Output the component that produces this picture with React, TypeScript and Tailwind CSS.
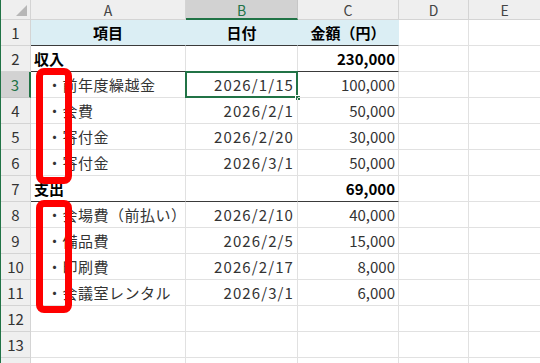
import React from "react";

type Cell = { t?: string; bold?: boolean; align?: "l" | "r" | "c"; indent?: boolean; date?: boolean };

const FONT = { fontFamily: '"Noto Sans CJK JP", "Noto Sans", sans-serif' };

const rows: Cell[][] = [
  [{ t: "項目", bold: true, align: "c" }, { t: "日付", bold: true, align: "c" }, { t: "金額（円）", bold: true, align: "c" }],
  [{ t: "収入", bold: true, align: "l" }, {}, { t: "230,000", bold: true, align: "r" }],
  [{ t: "・前年度繰越金", indent: true }, { t: "2026/1/15", align: "r", date: true }, { t: "100,000", align: "r" }],
  [{ t: "・会費", indent: true }, { t: "2026/2/1", align: "r", date: true }, { t: "50,000", align: "r" }],
  [{ t: "・寄付金", indent: true }, { t: "2026/2/20", align: "r", date: true }, { t: "30,000", align: "r" }],
  [{ t: "・寄付金", indent: true }, { t: "2026/3/1", align: "r", date: true }, { t: "50,000", align: "r" }],
  [{ t: "支出", bold: true, align: "l" }, {}, { t: "69,000", bold: true, align: "r" }],
  [{ t: "・会場費（前払い）", indent: true }, { t: "2026/2/10", align: "r", date: true }, { t: "40,000", align: "r" }],
  [{ t: "・備品費", indent: true }, { t: "2026/2/5", align: "r", date: true }, { t: "15,000", align: "r" }],
  [{ t: "・印刷費", indent: true }, { t: "2026/2/17", align: "r", date: true }, { t: "8,000", align: "r" }],
  [{ t: "・会議室レンタル", indent: true }, { t: "2026/3/1", align: "r", date: true }, { t: "6,000", align: "r" }],
  [{}, {}, {}],
  [{}, {}, {}],
  [{}, {}, {}],
];

const colHeaders = ["A", "B", "C", "D", "E"];

export default function App() {
  return (
    <div className="relative w-[540px] h-[363px] overflow-hidden bg-white" style={FONT}>
      <div className="grid grid-cols-[30px_155px_112px_101px_70px_72px] grid-rows-[20px_repeat(14,26px)] border-l border-[#217346]">
        {/* corner */}
        <div className="relative bg-[#efefef] border-r border-b border-[#d4d4d4]">
          <div
            className="absolute right-[3px] bottom-[3px] w-[11px] h-[11px] bg-[#b7b7b7]"
            style={{ clipPath: "polygon(100% 0, 100% 100%, 0 100%)" }}
          />
        </div>
        {colHeaders.map((h, i) => (
          <div
            key={h}
            className={
              i === 1
                ? "flex items-center justify-center bg-[#d2d2d2] border-r border-[#c6c6c6] border-b-2 border-b-[#217346] text-[14px] text-[#217346] pt-[2px]"
                : "flex items-center justify-center bg-[#efefef] border-r border-b border-[#d4d4d4] text-[14px] text-[#444] pt-[2px]"
            }
          >
            {h}
          </div>
        ))}
        {rows.map((r, ri) => {
          const rowNo = ri + 1;
          const thick = rowNo === 1 || rowNo === 2 || rowNo === 7;
          return (
            <React.Fragment key={ri}>
              <div
                className={
                  rowNo === 3
                    ? "flex items-center justify-center bg-[#d2d2d2] border-b border-[#c6c6c6] border-r-2 border-r-[#217346] text-[15px] text-[#217346] pt-[2px]"
                    : "flex items-center justify-center bg-[#efefef] border-r border-b border-[#d4d4d4] text-[15px] text-[#333] pt-[2px]"
                }
              >
                {rowNo < 14 ? rowNo : ""}
              </div>
              {r.map((c, ci) => {
                const blue = rowNo === 1;
                const cls = [
                  "relative flex items-center whitespace-nowrap text-[15px] pt-[2px] border-r border-b",
                  blue ? "bg-[#dbeef4] border-r-[#dbeef4]" : "border-r-[#e1e1e1]",
                  thick ? "border-b-[#3a3a3a]" : "border-b-[#e1e1e1]",
                  c.align === "r" ? "justify-end pr-[3px]" : c.align === "c" ? "justify-center" : "justify-start",
                  c.indent ? "pl-[16px] tracking-[0.5px]" : c.align === "l" ? "pl-[3px]" : "",
                  c.date ? "tracking-[1.1px]" : "",
                  c.bold ? "font-bold text-black" : "text-[#333]",
                ].join(" ");
                return (
                  <div key={ci} className={cls}>
                    {c.t}
                    {rowNo === 3 && ci === 1 && (
                      <>
                        <div className="absolute left-[-1px] top-[-1px] right-[-1px] bottom-[-1px] border-2 border-[#217346]" />
                        <div className="absolute right-[-4px] bottom-[-4px] w-[6px] h-[6px] bg-[#217346] border border-white" />
                      </>
                    )}
                  </div>
                );
              })}
              <div className="border-r border-b border-[#e1e1e1]" />
              <div className="border-r border-b border-[#e1e1e1]" />
            </React.Fragment>
          );
        })}
      </div>
      {/* red highlight boxes */}
      <div className="absolute left-[36px] top-[68px] w-[36px] h-[116px] border-[7px] border-[#ff0000] rounded-[8px]" />
      <div className="absolute left-[36px] top-[200px] w-[36px] h-[113px] border-[7px] border-[#ff0000] rounded-[8px]" />
    </div>
  );
}
